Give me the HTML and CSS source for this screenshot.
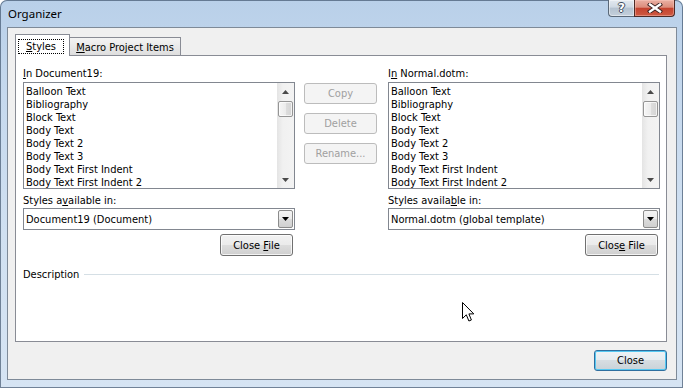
FILE: index.html
```html
<!DOCTYPE html>
<html>
<head>
<meta charset="utf-8">
<title>Organizer</title>
<link rel="stylesheet" href="styles.css">
</head>
<body>
<div class="window">
  <div class="titlebar">
    <span class="title">Organizer</span>
    <div class="caption">
      <div class="cap-help"><span class="qmark">?</span></div>
      <div class="cap-close">
        <svg width="16" height="10" viewBox="0 0 16 10"><path d="M3 1.5 L13 8.5 M13 1.5 L3 8.5" stroke="#3a2222" stroke-width="4.2" stroke-linecap="square" fill="none"/><path d="M3 1.5 L13 8.5 M13 1.5 L3 8.5" stroke="#ffffff" stroke-width="2.4" stroke-linecap="square" fill="none"/></svg>
      </div>
    </div>
  </div>
  <div class="client">
    <div class="tabs">
      <div class="tab active"><span class="focus"><u>S</u>tyles</span></div>
      <div class="tab"><span><u>M</u>acro Project Items</span></div>
    </div>
    <div class="panel">
      <div class="cols">
        <div class="col">
          <div class="label"><span><u>I</u>n Document19:</span></div>
          <div class="list">
            <div class="items">
              <div>Balloon Text</div>
              <div>Bibliography</div>
              <div>Block Text</div>
              <div>Body Text</div>
              <div>Body Text 2</div>
              <div>Body Text 3</div>
              <div>Body Text First Indent</div>
              <div>Body Text First Indent 2</div>
              <div>Body Text Indent</div>
            </div>
            <div class="scroll">
              <div class="sbtn"><svg width="7" height="4" viewBox="0 0 7 4"><path d="M3.5 0 L7 4 L0 4 Z" fill="#4a4a4a"/></svg></div>
              <div class="thumb"></div>
              <div class="track"></div>
              <div class="sbtn"><svg width="7" height="4" viewBox="0 0 7 4"><path d="M0 0 L7 0 L3.5 4 Z" fill="#4a4a4a"/></svg></div>
            </div>
          </div>
          <div class="label label2"><span>Styles a<u>v</u>ailable in:</span></div>
          <div class="combo">
            <span class="combo-text">Document19 (Document)</span>
            <div class="drop"><svg width="7" height="4" viewBox="0 0 7 4"><path d="M0 0 L7 0 L3.5 4 Z" fill="#000"/></svg></div>
          </div>
          <div class="btnrow"><div class="btn"><span>Close <u>F</u>ile</span></div></div>
        </div>
        <div class="mid">
          <div class="btn disabled"><span>Copy</span></div>
          <div class="btn disabled"><span>Delete</span></div>
          <div class="btn disabled"><span>Rename...</span></div>
        </div>
        <div class="col">
          <div class="label"><span>I<u>n</u> Normal.dotm:</span></div>
          <div class="list">
            <div class="items">
              <div>Balloon Text</div>
              <div>Bibliography</div>
              <div>Block Text</div>
              <div>Body Text</div>
              <div>Body Text 2</div>
              <div>Body Text 3</div>
              <div>Body Text First Indent</div>
              <div>Body Text First Indent 2</div>
              <div>Body Text Indent</div>
            </div>
            <div class="scroll">
              <div class="sbtn"><svg width="7" height="4" viewBox="0 0 7 4"><path d="M3.5 0 L7 4 L0 4 Z" fill="#4a4a4a"/></svg></div>
              <div class="thumb"></div>
              <div class="track"></div>
              <div class="sbtn"><svg width="7" height="4" viewBox="0 0 7 4"><path d="M0 0 L7 0 L3.5 4 Z" fill="#4a4a4a"/></svg></div>
            </div>
          </div>
          <div class="label label2"><span>Styles availa<u>b</u>le in:</span></div>
          <div class="combo">
            <span class="combo-text">Normal.dotm (global template)</span>
            <div class="drop"><svg width="7" height="4" viewBox="0 0 7 4"><path d="M0 0 L7 0 L3.5 4 Z" fill="#000"/></svg></div>
          </div>
          <div class="btnrow"><div class="btn"><span>Clos<u>e</u> File</span></div></div>
        </div>
      </div>
      <div class="desc"><span>Description</span><div class="rule"></div></div>
    </div>
    <div class="footer"><div class="btn default"><span>Close</span></div></div>
  </div>
  <svg class="cursor" width="13" height="21" viewBox="0 0 13 21"><path d="M0.5 0.5 L0.5 16.5 L4.3 12.8 L6.9 19 L9.4 18 L6.9 11.9 L11.8 11.9 Z" fill="#fff" stroke="#000" stroke-width="1" stroke-linejoin="miter"/></svg>
</div>
</body>
</html>
```

FILE: styles.css
```css
* { box-sizing: border-box; }

html, body {
  margin: 0;
  padding: 0;
  background: #ffffff;
}

body {
  width: 683px;
  height: 388px;
  overflow: hidden;
  font-family: "DejaVu Sans Condensed", "Liberation Sans", sans-serif;
  font-size: 11px;
  color: #000;
}

u {
  text-decoration-thickness: 1px;
  text-underline-offset: 1px;
}

.window {
  position: relative;
  width: 683px;
  height: 388px;
  padding: 0 6px 8px 7px;
  display: flex;
  flex-direction: column;
  border-radius: 7px 7px 0 0;
  background: linear-gradient(180deg, #b9d0e9 0%, #c6d9ee 25%, #d0e0f1 60%, #d6e4f3 100%);
  box-shadow: inset 0 0 0 1px rgba(45, 65, 90, 0.6);
}

.titlebar {
  height: 27px;
  display: flex;
  align-items: flex-start;
  padding: 0 2px 0 1px;
}

.title {
  margin-top: 6px;
  font-family: "Noto Sans", "Open Sans", sans-serif;
  font-size: 11.5px;
  line-height: 16px;
  color: #000;
}

.caption {
  margin-left: auto;
  display: flex;
  height: 17px;
}

.cap-help {
  width: 26px;
  height: 17px;
  border: 1px solid #5a6878;
  border-top: none;
  border-right: none;
  border-radius: 0 0 0 4px;
  background: linear-gradient(180deg, #e3e9f0 0%, #cfd9e3 45%, #b4c2d0 50%, #c4cfdb 100%);
  box-shadow: inset 0 0 0 1px rgba(255, 255, 255, 0.45);
  display: flex;
  align-items: center;
  justify-content: center;
}

.qmark {
  font-family: "DejaVu Sans", sans-serif;
  font-weight: bold;
  font-size: 12px;
  line-height: 14px;
  color: #fff;
  text-shadow: 1px 0 0 #3d4b5c, -1px 0 0 #3d4b5c, 0 1px 0 #3d4b5c, 0 -1px 0 #3d4b5c;
}

.cap-close {
  width: 41px;
  height: 17px;
  border: 1px solid #4d2a26;
  border-top: none;
  border-radius: 0 0 4px 0;
  background: linear-gradient(180deg, #eab0a3 0%, #dc8d7c 45%, #c4432f 52%, #cf5a42 100%);
  box-shadow: inset 0 0 0 1px rgba(255, 210, 200, 0.4);
  display: flex;
  align-items: center;
  justify-content: center;
}

.client {
  height: 353px;
  border: 1px solid #7e8a98;
  background: #f0f0f0;
  padding: 6px 9px 8px 7px;
  display: flex;
  flex-direction: column;
}

.tabs {
  display: flex;
  align-items: flex-end;
  height: 21px;
}

.tab {
  width: 112px;
  height: 18px;
  margin-left: -1px;
  border: 1px solid #898c95;
  border-bottom: none;
  background: linear-gradient(180deg, #f4f4f4 0%, #e9e9e9 50%, #dedede 100%);
  text-align: center;
  line-height: 17px;
  padding-top: 1px;
  white-space: nowrap;
}

.tab.active {
  width: 55px;
  height: 22px;
  margin-left: 0;
  margin-bottom: -1px;
  position: relative;
  z-index: 1;
  background: #ffffff;
  padding: 4px 0 0 2px;
  text-align: left;
  line-height: 13px;
}

.focus {
  display: inline-block;
  width: 46px;
  height: 15px;
  border: 1px dotted #000;
  text-align: center;
  line-height: 13px;
}

.panel {
  height: 287px;
  border: 1px solid #898c95;
  background: #ffffff;
  padding: 11px 6px 0 7px;
  display: flex;
  flex-direction: column;
}

.cols {
  display: flex;
}

.col {
  width: 272px;
  display: flex;
  flex-direction: column;
}

.mid {
  width: 73px;
  margin: 16px 11px 0 9px;
  display: flex;
  flex-direction: column;
  gap: 9px;
}

.label {
  line-height: 13px;
  white-space: nowrap;
}

.label2 {
  margin-top: 5px;
}

.list {
  margin-top: 2px;
  height: 107px;
  border: 1px solid #828790;
  display: flex;
  overflow: hidden;
}

.items {
  flex: 1;
  padding: 2px 0 0 2px;
  overflow: hidden;
}

.items div {
  height: 13px;
  line-height: 13px;
  white-space: nowrap;
}

.scroll {
  width: 17px;
  display: flex;
  flex-direction: column;
  background: linear-gradient(90deg, #e4e4e4 0%, #f1f1f1 35%, #f3f3f3 100%);
}

.sbtn {
  height: 17px;
  display: flex;
  align-items: center;
  justify-content: center;
}

.thumb {
  margin: 1px 1px 0 1px;
  height: 16px;
  border: 1px solid #959595;
  border-radius: 2px;
  background: linear-gradient(90deg, #f6f6f6 0%, #ececec 50%, #dedede 51%, #d4d4d4 100%);
  box-shadow: inset 0 0 0 1px rgba(255, 255, 255, 0.7);
}

.track {
  flex: 1;
}

.combo {
  margin-top: 1px;
  height: 22px;
  border: 1px solid #828790;
  display: flex;
  align-items: center;
  padding-left: 2px;
  background: #fff;
}

.combo-text {
  flex: 1;
  white-space: nowrap;
  line-height: 13px;
}

.drop {
  width: 15px;
  height: 18px;
  margin-right: 1px;
  border: 1px solid #8b8b8b;
  border-radius: 2px;
  background: linear-gradient(180deg, #f4f4f4 0%, #ebebeb 50%, #dcdcdc 51%, #d0d0d0 100%);
  display: flex;
  align-items: center;
  justify-content: center;
}

.btnrow {
  margin-top: 4px;
  padding-right: 2px;
  display: flex;
  justify-content: flex-end;
}

.btn {
  width: 73px;
  height: 22px;
  border: 1px solid #707070;
  border-radius: 3px;
  background: linear-gradient(180deg, #f2f2f2 0%, #ebebeb 49%, #dddddd 50%, #cfcfcf 100%);
  box-shadow: inset 0 0 0 1px rgba(255, 255, 255, 0.75);
  display: flex;
  align-items: center;
  justify-content: center;
  white-space: nowrap;
  line-height: 13px;
}

.btn.disabled {
  height: 21px;
  border-color: #bcbcbc;
  background: #f4f4f4;
  box-shadow: none;
  color: #a0a0a0;
}

.desc {
  margin-top: 12px;
  height: 13px;
  line-height: 13px;
  display: flex;
  align-items: center;
  padding-right: 1px;
}

.rule {
  flex: 1;
  height: 1px;
  margin-left: 5px;
  background: #d5dfe5;
}

.footer {
  margin-top: 8px;
  display: flex;
  justify-content: flex-end;
}

.btn.default {
  height: 21px;
  border-color: #2f6f9f;
  box-shadow: inset 0 0 0 1px #55c8f2;
  background: linear-gradient(180deg, #eef3f6 0%, #e6ecf0 49%, #d6dde2 50%, #c9d2d8 100%);
}

.cursor {
  position: absolute;
  left: 462px;
  top: 302px;
}
```
